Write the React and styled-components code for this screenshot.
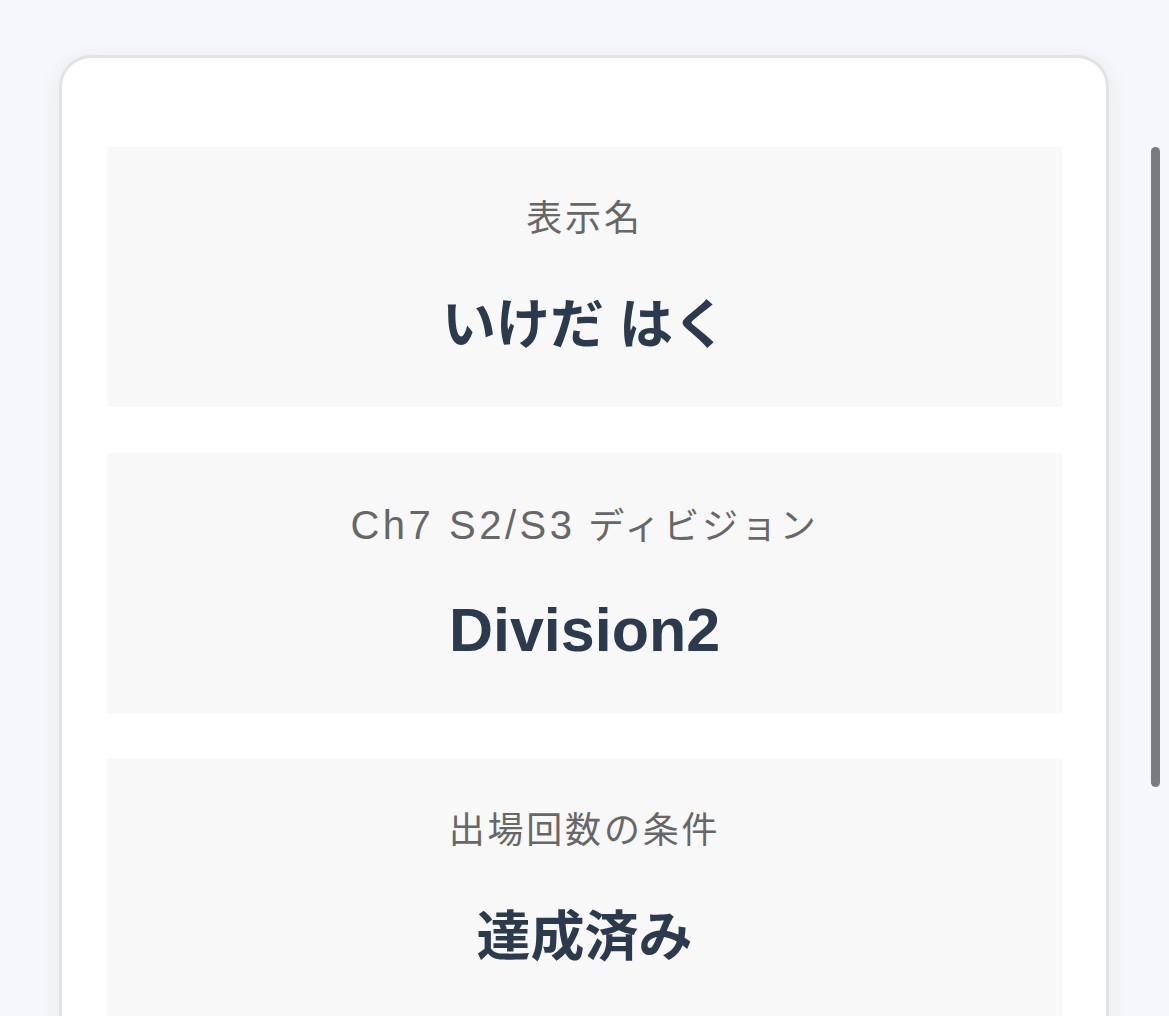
import React from "react";
import styled, { createGlobalStyle } from "styled-components";

const GlobalStyle = createGlobalStyle`
  html, body {
    margin: 0;
    padding: 0;
    background: #f6f7fa;
    overflow: hidden;
  }
  body {
    font-family: "Liberation Sans", "Noto Sans CJK JP", sans-serif;
  }
`;

const Page = styled.div`
  position: relative;
  height: 1016px;
  padding: 55px 60px 0 59px;
  box-sizing: border-box;
  overflow: hidden;
`;

const Card = styled.section`
  background: #ffffff;
  border: 3px solid #e3e3e6;
  border-bottom: none;
  border-radius: 32px 32px 0 0;
  box-shadow: 0 4px 22px rgba(30, 40, 70, 0.07);
  padding: 89px 44px 0 45px;
  display: flex;
  flex-direction: column;
  gap: 46px;
  min-height: 1100px;
  box-sizing: border-box;
`;

const Field = styled.div`
  background: #f8f8f8;
  height: 260px;
  display: flex;
  flex-direction: column;
  align-items: center;
  padding-top: 47px;
  box-sizing: border-box;
  text-align: center;
`;

const Label = styled.div`
  font-family: "Liberation Sans", "Noto Sans CJK JP", sans-serif;
  font-size: 36px;
  line-height: 50px;
  color: #676767;
  letter-spacing: 2.8px;
  white-space: nowrap;
`;

/* Latin run inside a label, set wider like the system Latin face */
const Latin = styled.span`
  font-size: 40px;
  letter-spacing: 3.5px;
`;

const Value = styled.div`
  margin-top: ${(p) => (p.$latin ? "38px" : "41px")};
  font-family: "Liberation Sans", "Noto Sans CJK JP", sans-serif;
  font-size: ${(p) => (p.$latin ? "61px" : "54px")};
  line-height: 80px;
  font-weight: 700;
  color: #2c3a4e;
  white-space: nowrap;
`;

const ScrollThumb = styled.div`
  position: absolute;
  top: 147px;
  right: 9px;
  width: 9px;
  height: 640px;
  border-radius: 5px;
  background: #7b7b7d;
`;

const fields = [
  { id: "name", label: "表示名", value: "いけだ はく" },
  {
    id: "division",
    label: (
      <>
        <Latin>Ch7 S2/S3</Latin> ディビジョン
      </>
    ),
    value: "Division2",
    latin: true,
  },
  { id: "entries", label: "出場回数の条件", value: "達成済み" },
];

export default function App() {
  return (
    <>
      <GlobalStyle />
      <Page>
        <Card>
          {fields.map((f) => (
            <Field key={f.id}>
              <Label>{f.label}</Label>
              <Value $latin={f.latin}>{f.value}</Value>
            </Field>
          ))}
        </Card>
        <ScrollThumb />
      </Page>
    </>
  );
}
